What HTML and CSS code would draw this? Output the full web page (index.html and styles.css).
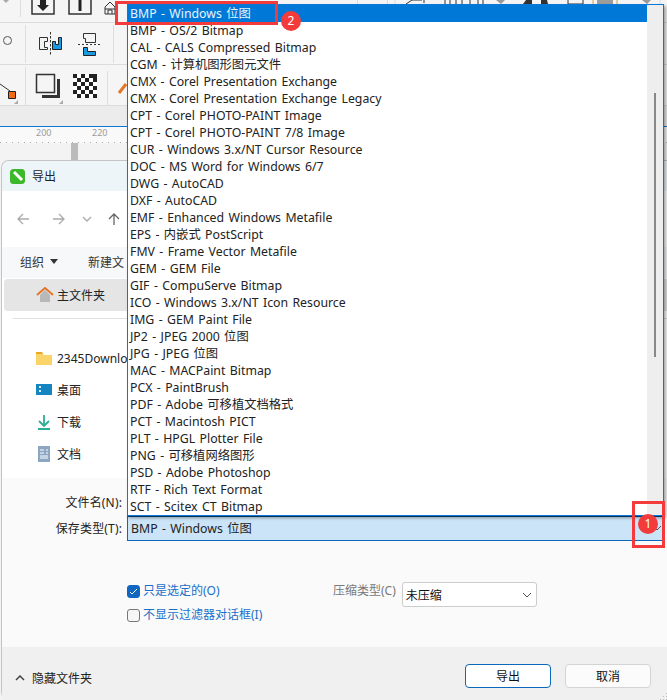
FILE: index.html
```html
<!DOCTYPE html>
<html lang="zh">
<head>
<meta charset="utf-8">
<title>导出</title>
<link rel="stylesheet" href="styles.css">
</head>
<body>
<div class="desktop">
  <header class="app">
    <div class="tool-row r1">
      <svg class="ico" width="667" height="22" viewBox="0 0 667 22">
        <path d="M3 0h6l-3 3z" fill="#aaa"/>
        <path d="M20.500 0v17" class="sep"/>
        <path d="M32 0v14h22V0M69 0v14h22V0" class="ln"/>
        <path d="M40 0h6v5h3l-6 6-6-6h3z" fill="#222"/>
        <path d="M78.500 0h3v11h-3z" fill="#222"/>
        <path d="M105 14V7l5-5 5 5v7zM108 14v-4h4v4M105 9h10" class="ln thin"/>
        <path d="M357.500 0v4M387.500 0v4M395 0v4M660 0v4" class="sep"/>
        <path d="M406 4l6-4h10M424 0v3M445 0v4M450 0v4M456 0v4M462 0v4M470 0v4M478 0v4M483 0v4" fill="none" stroke="#333"/>
        <path d="M496 0h9l-4 4zM642 0h9l-4 4z" fill="#999"/>
        <path d="M523 4l3-4h6v4zM541 0h6l1 4h-7z" fill="#333"/>
        <path d="M568 0v4h15V0" fill="none" stroke="#333"/>
        <path d="M593 0v4M617 0v4" fill="none" stroke="#e59a3f"/>
        <path d="M597 1h16M597 3h16" fill="none" stroke="#444"/>
      </svg>
    </div>
    <div class="tool-row r2">
      <svg class="ico" width="127" height="41" viewBox="0 0 127 41">
        <circle cx="7.500" cy="17.500" r="4" class="ln thin dim"/>
        <path d="M25.500 2v38M113.500 2v38" class="sep"/>
        <path d="M39.500 14.500h8v4h-3v6h3v2h-8z" fill="#f3f3f3" stroke="#333"/>
        <path d="M50.500 9v24" stroke="#333" stroke-dasharray="2.500 1.500"/>
        <path d="M61.500 14.500v12h-9v-8h3v3h3v-7z" fill="#1b9ae4" stroke="#222"/>
        <path d="M83.500 10.500h12v9h-10v-4h-2zM76 21.500h24" fill="none" stroke="#333"/>
        <path d="M76 21.500h24" stroke="#fff" stroke-dasharray="2 2"/>
        <path d="M83.500 24.500h4v4h8v4h-12z" fill="#1b9ae4" stroke="#222"/>
      </svg>
    </div>
    <div class="tool-row r3">
      <svg class="ico" width="127" height="40" viewBox="0 0 127 40">
        <path d="M0 19l10 7" class="ln thin"/>
        <path d="M8.500 26.500h7v7h-7z" fill="#f26a12" stroke="#222"/>
        <path d="M14 39l4-4v4z" fill="#aaa"/>
        <path d="M25.500 2v38M107.500 6v34" class="sep"/>
        <path d="M36.500 9.500h18v18h-18z" fill="none" stroke="#333" stroke-width="1.500"/>
        <path d="M58.500 14v17.500H42" fill="none" stroke="#333" stroke-width="3"/>
        <path d="M59 39l4-4v4z" fill="#aaa"/>
        <path d="M73 9h24v24H73z" fill="#fff"/>
        <path d="M73 9h4v4h-4zM81 9h4v4h-4zM89 9h8v4h-8zM77 13h4v4h-4zM85 13h4v4h-4zM93 13h4v4h-4zM73 17h4v4h-4zM81 17h4v4h-4zM89 17h4v4h-4zM77 21h4v4h-4zM85 21h4v4h-4zM93 21h4v4h-4zM73 25h4v4h-4zM81 25h4v4h-4zM89 25h4v4h-4zM77 29h4v4h-4zM85 29h4v4h-4zM93 29h4v4h-4z" fill="#222"/>
        <path d="M119 28l7-9" stroke="#e5762a" stroke-width="3"/>
      </svg>
    </div>
    <div class="band"></div>
    <div class="ruler"><span class="tick t200">200</span><span class="tick t220">220</span></div>
    <div class="ruler-v"><div class="vthumb"></div></div>
  </header>

  <section class="dialog">
    <div class="title">
      <svg width="15" height="15" viewBox="0 0 15 15"><rect width="15" height="15" rx="3.500" fill="#3db82a"/><path d="M4 3l8 8" stroke="#fff" stroke-width="3"/></svg>
      <span>导出</span>
    </div>
    <div class="nav">
      <svg width="115" height="14" viewBox="0 0 115 14"><path d="M2 7h11M7 2L2 7l5 5M37 7h11M43 2l5 5-5 5" class="nav-arrow"/><path d="M67 5l4 4 4-4" class="nav-arrow thin"/><path d="M98 13V2M93 7l5-5 5 5" class="nav-dark"/></svg>
    </div>
    <div class="cmdbar">
      <span>组织</span><i class="caret"></i><span class="newdir">新建文</span>
    </div>
    <div class="side">
      <div class="home"><svg width="18" height="16" viewBox="0 0 18 16"><path d="M4 8v7h10V8L9 3z" fill="#b8b8b8"/><path d="M1 8l8-7 8 7" fill="none" stroke="#e5752a" stroke-width="2"/></svg><span>主文件夹</span></div>
      <div class="rule"></div>
      <div class="place p1"><svg width="16" height="14" viewBox="0 0 16 14"><path d="M0 2h6l2 2h8v10H0z" fill="#fbd469"/><path d="M0 1h6l1 2H0z" fill="#eba820"/></svg><span>2345Downlo</span></div>
      <div class="place"><svg width="16" height="14" viewBox="0 0 16 14"><rect y="1" width="16" height="11" fill="#1585c2"/><path d="M3 3h2v2H3zM3 7h2v2H3z" fill="#d6f0fb"/></svg><span>桌面</span></div>
      <div class="place"><svg width="16" height="16" viewBox="0 0 16 16"><path d="M8 1v10M3 7l5 5 5-5M2 15h12" fill="none" stroke="#2cae92" stroke-width="1.800"/></svg><span>下载</span></div>
      <div class="place"><svg width="16" height="16" viewBox="0 0 16 16"><rect x="2" width="12" height="16" fill="#8ca6c3"/><path d="M4 4h4M10 4h2M4 7h4M10 7h2M4 10h8M4 12h8" stroke="#fff"/></svg><span>文档</span></div>
    </div>
    <div class="form">
      <div class="field-labels"><span>文件名(N):</span><span>保存类型(T):</span></div>
      <div class="opts">
        <div class="checks">
          <label class="chk"><i class="box on"><svg width="9" height="7" viewBox="0 0 9 7"><path d="M1 4l2 2 5-5" fill="none" stroke="#fff"/></svg></i><span>只是选定的(O)</span></label>
          <label class="chk"><i class="box"></i><span>不显示过滤器对话框(I)</span></label>
        </div>
        <div class="compress"><span class="clabel">压缩类型(C)</span><div class="cselect"><span>未压缩</span><svg width="10" height="6" viewBox="0 0 10 6"><path d="M1 1l4 4 4-4" fill="none" stroke="#555"/></svg></div></div>
      </div>
    </div>
    <div class="foot">
      <div class="hide"><svg width="10" height="6" viewBox="0 0 10 6"><path d="M1 5l4-4 4 4" fill="none" stroke="#444" stroke-width="1.500"/></svg><span>隐藏文件夹</span></div>
      <div class="btns"><button class="btn primary">导出</button><button class="btn">取消</button></div>
    </div>
  </section>

  <div class="type-select"><span>BMP - Windows 位图</span><svg class="ts-chev" width="10" height="6" viewBox="0 0 10 6"><path d="M1 1l4 4 4-4" fill="none" stroke="#555"/></svg></div>

  <div class="list">
    <ul class="items">
      <li class="sel">BMP - Windows 位图</li>
      <li>BMP - OS/2 Bitmap</li>
      <li>CAL - CALS Compressed Bitmap</li>
      <li>CGM - 计算机图形图元文件</li>
      <li>CMX - Corel Presentation Exchange</li>
      <li>CMX - Corel Presentation Exchange Legacy</li>
      <li>CPT - Corel PHOTO-PAINT Image</li>
      <li>CPT - Corel PHOTO-PAINT 7/8 Image</li>
      <li>CUR - Windows 3.x/NT Cursor Resource</li>
      <li>DOC - MS Word for Windows 6/7</li>
      <li>DWG - AutoCAD</li>
      <li>DXF - AutoCAD</li>
      <li>EMF - Enhanced Windows Metafile</li>
      <li>EPS - 内嵌式 PostScript</li>
      <li>FMV - Frame Vector Metafile</li>
      <li>GEM - GEM File</li>
      <li>GIF - CompuServe Bitmap</li>
      <li>ICO - Windows 3.x/NT Icon Resource</li>
      <li>IMG - GEM Paint File</li>
      <li>JP2 - JPEG 2000 位图</li>
      <li>JPG - JPEG 位图</li>
      <li>MAC - MACPaint Bitmap</li>
      <li>PCX - PaintBrush</li>
      <li>PDF - Adobe 可移植文档格式</li>
      <li>PCT - Macintosh PICT</li>
      <li>PLT - HPGL Plotter File</li>
      <li>PNG - 可移植网络图形</li>
      <li>PSD - Adobe Photoshop</li>
      <li>RTF - Rich Text Format</li>
      <li>SCT - Scitex CT Bitmap</li>
    </ul>
    <div class="track"><div class="thumb"></div></div>
  </div>

  <div class="mark m2"></div><div class="badge b2">2</div>
  <div class="mark m1"></div><div class="badge b1">1</div>
  <div class="grip"></div>
</div>
</body>
</html>
```
FILE: styles.css
```css
* { box-sizing: border-box; }
html, body { margin: 0; padding: 0; }
body { font-family: "Noto Sans", "Noto Sans CJK SC", sans-serif; font-size: 12px; color: #222; }
.desktop { position: relative; width: 667px; height: 700px; overflow: hidden; background: #f3f3f3; }
.app { display: flex; flex-direction: column; height: 160px; }
.tool-row { background: #f5f5f5; border-bottom: 1px solid #dcdcdc; }
.r1 { height: 23px; }
.r2 { height: 42px; }
.r3 { height: 41px; }
.ico { display: block; }
.ln { fill: none; stroke: #333; stroke-width: 1.500; }
.thin { stroke-width: 1; }
.dim { stroke: #555; }
.sep { fill: none; stroke: #ddd; }
.band { height: 21px; background: #ececec; border-bottom: 1px solid #0a78d4; }
.ruler { position: relative; height: 16px; flex: none; background-color: #f9f9f9; font-size: 9px; color: #999; background-image: repeating-linear-gradient(90deg, #aaa 0 1px, transparent 1px 6px); background-size: 100% 1px; background-position: 0 15px; background-repeat: no-repeat; }
.tick { position: absolute; top: 0; line-height: 12px; }
.t200 { left: 36px; }
.t220 { left: 92px; }
.ruler-v { flex: 1; padding-left: 71px; }
.vthumb { width: 7px; height: 100%; background: #bbb; }
.dialog { position: absolute; left: 1px; top: 160px; width: 680px; height: 540px; display: flex; flex-direction: column; background: #fff; border: 1px solid #c4c4c4; border-bottom: 0; border-radius: 8px 8px 0 8px; }
.title { display: flex; align-items: center; gap: 7px; height: 30px; padding-left: 8px; background: #eef5f9; border-radius: 8px 0 0 0; }
.nav { height: 56px; padding: 21px 0 0 14px; background: #fff; }
.nav-arrow { fill: none; stroke: #aaa; stroke-width: 1.300; }
.nav-dark { fill: none; stroke: #666; stroke-width: 1.300; }
.cmdbar { display: flex; align-items: center; height: 31px; padding: 0 0 2px 18px; background: #f6f8fa; color: #333; }
.caret { width: 0; height: 0; margin-left: 6px; border: 4px solid transparent; border-top: 5px solid #333; border-bottom: 0; }
.newdir { margin-left: 30px; }
.side { display: flex; flex-direction: column; height: 200px; padding: 0 2px; }
.home { display: flex; align-items: center; gap: 3px; height: 32px; margin-top: 1px; padding-left: 32px; background: #e5e5e5; border-radius: 4px; }
.rule { height: 1px; margin: 7px 9px 0; background: #e0e0e0; }
.place { display: flex; align-items: center; gap: 5px; height: 32px; padding-left: 32px; }
.p1 { margin-top: 23px; }
.form { display: flex; flex-direction: column; height: 169px; background: #fafafa; }
.field-labels { display: flex; flex-direction: column; align-items: flex-end; gap: 8px; width: 120px; padding-top: 15px; letter-spacing: .15px; }
.opts { display: flex; margin: 46px 0 0 125px; }
.checks { display: flex; flex-direction: column; gap: 8px; width: 206px; }
.chk { display: flex; align-items: center; gap: 3px; color: #1b6fc9; height: 16px; }
.chk span { margin-top: -2px; }
.box { display: flex; align-items: center; justify-content: center; width: 13px; height: 13px; border: 1px solid #777; border-radius: 3px; background: #f6f6f6; }
.box.on { background: #0f67c0; border-color: #0f67c0; }
.compress { display: flex; gap: 6px; align-items: flex-start; margin-top: -2px; }
.clabel { color: #777; }
.cselect { display: flex; align-items: center; justify-content: space-between; width: 135px; height: 25px; margin-top: 1px; padding: 0 4px 0 3px; background: #fff; border: 1px solid #ccc; border-radius: 3px; color: #111; }
.foot { display: flex; align-items: center; height: 53px; padding-top: 5px; background: #f0f0f0; }
.hide { display: flex; align-items: center; gap: 7px; margin-top: 4px; padding-left: 13px; width: 463px; }
.btns { display: flex; gap: 14px; }
.btn { width: 86px; height: 24px; padding: 0; font: inherit; color: #111; background: #fbfbfb; border: 1px solid #d4d4d4; border-radius: 4px; }
.btn.primary { border-color: #0a69bd; background: #fff; }
.type-select { position: absolute; left: 127px; top: 516px; width: 536px; height: 25px; display: flex; align-items: center; justify-content: space-between; padding: 0 1px 2px 3px; background: #cce4f7; border-top: 1px solid #05457f; border-bottom: 1px solid #0a69bd; border-left: 1px solid #0a69bd; font-size: 12.300px; word-spacing: 1.200px; color: #222; }
.ts-chev { flex: none; }
.list { position: absolute; left: 127px; top: 4px; width: 537px; height: 512px; display: flex; background: #fff; border: 1px solid #0a78d4; box-shadow: 2px 2px 3px rgba(0, 0, 0, .35); }
.items { flex: 1; margin: 0; padding: 0; list-style: none; }
.items li { height: 17px; padding-left: 2px; line-height: 17px; font-size: 12.300px; word-spacing: 1.200px; color: #222; white-space: nowrap; }
.items li.sel { background: #0078d7; color: #e8f3fb; }
.track { position: relative; width: 16px; background: #eee; }
.thumb { position: absolute; left: 7px; top: 88px; width: 2px; height: 264px; background: #888; }
.mark { position: absolute; border: 3px solid #f33b3b; }
.m1 { left: 632px; top: 501px; width: 33px; height: 47px; }
.m2 { left: 115px; top: 1px; width: 163px; height: 24px; }
.badge { position: absolute; width: 20px; height: 20px; border-radius: 50%; background: #f33b3b; color: #fff; text-align: center; line-height: 20px; }
.b1 { left: 638px; top: 514px; }
.b2 { left: 281px; top: 11px; }
.grip { position: absolute; right: 0; bottom: 0; width: 8px; height: 8px; background-image: radial-gradient(#bbb 1px, transparent 1px); background-size: 3px 3px; clip-path: polygon(100% 0, 100% 100%, 0 100%); }
```
